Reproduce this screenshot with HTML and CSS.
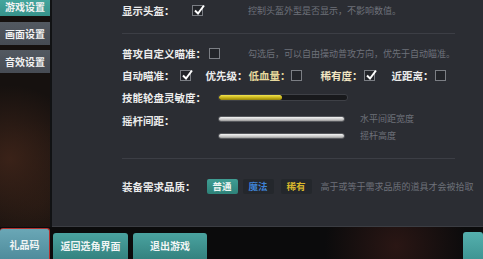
FILE: index.html
```
<!DOCTYPE html>
<html lang="zh-CN">
<head>
    <meta charset="UTF-8">
    <meta name="viewport" content="width=device-width, initial-scale=1.0">
    <title>游戏设置</title>
    <link rel="stylesheet" href="styles.css">
</head>
<body>
    <div class="screen">
        <div class="sidebar">
            <div class="tab tab-first active">游戏设置</div>
            <div class="tab">画面设置</div>
            <div class="tab">音效设置</div>
        </div>

        <div class="panel">
            <div class="row row-top">
                <span class="label label-helmet">显示头盔：</span>
                <span class="check checked"><svg viewBox="0 0 12 12"><path d="M2 6.5 L5 9.5 L11 1.5"/></svg></span>
                <span class="desc desc-helmet">控制头盔外型是否显示，不影响数值。</span>
            </div>
            <div class="sep sep-first"></div>

            <div class="row">
                <span class="label">普攻自定义瞄准：</span>
                <span class="check check-aim"></span>
                <span class="desc desc-aim">勾选后，可以自由操动普攻方向，优先于自动瞄准。</span>
            </div>

            <div class="row">
                <span class="label">自动瞄准：</span>
                <span class="check checked check-auto"><svg viewBox="0 0 12 12"><path d="M2 6.5 L5 9.5 L11 1.5"/></svg></span>
                <span class="label label-priority">优先级：</span>
                <span class="label label-hp">低血量：</span>
                <span class="check"></span>
                <span class="label label-rare">稀有度：</span>
                <span class="check checked check-tight"><svg viewBox="0 0 12 12"><path d="M2 6.5 L5 9.5 L11 1.5"/></svg></span>
                <span class="label label-near">近距离：</span>
                <span class="check check-tight"></span>
            </div>

            <div class="row">
                <span class="label label-fixed">技能轮盘灵敏度：</span>
                <div class="slider slider-yellow">
                    <div class="slider-fill" style="width: 49%"></div>
                </div>
            </div>

            <div class="row row-stick">
                <span class="label label-fixed label-stick">摇杆间距：</span>
                <div class="stick-lines">
                    <div class="stick-line">
                        <div class="slider slider-grey"></div>
                        <span class="desc desc-stick">水平间距宽度</span>
                    </div>
                    <div class="stick-line">
                        <div class="slider slider-grey"></div>
                        <span class="desc desc-stick">摇杆高度</span>
                    </div>
                </div>
            </div>
            <div class="sep sep-second"></div>

            <div class="row row-quality">
                <span class="label">装备需求品质：</span>
                <span class="quality q-normal">普通</span>
                <span class="quality q-magic">魔法</span>
                <span class="quality q-rare">稀有</span>
                <span class="desc desc-quality">高于或等于需求品质的道具才会被拾取</span>
            </div>
        </div>

        <div class="bottombar">
            <div class="btn btn-gift">礼品码</div>
            <div class="btn btn-back">返回选角界面</div>
            <div class="btn btn-quit">退出游戏</div>
            <div class="btn btn-edge"></div>
        </div>
    </div>
</body>
</html>
```

FILE: styles.css
```
body {
    margin: 0;
    width: 483px;
    height: 259px;
    overflow: hidden;
    background: #0c0c0d;
    font-family: "Noto Sans CJK SC", "Noto Sans", sans-serif;
}
.screen {
    display: grid;
    grid-template-columns: 50px 1fr;
    grid-template-rows: 227px 32px;
    column-gap: 2px;
    height: 259px;
    background: #111214;
}

/* left tabs */
.sidebar {
    display: flex;
    flex-direction: column;
    gap: 6px;
    background:
        radial-gradient(circle at 20% 70%, #3a2218 0, rgba(40, 24, 18, 0) 45%),
        radial-gradient(circle at 80% 90%, #241812 0, rgba(36, 24, 18, 0) 40%),
        #16110f;
}
.tab {
    height: 23px;
    line-height: 23px;
    text-align: center;
    font-size: 10px;
    font-weight: bold;
    color: #f2f2f2;
    background: linear-gradient(#535961, #464b53);
}
.tab-first {
    height: 16px;
    line-height: 13px;
}
.tab.active {
    background: linear-gradient(#44a69d, #37928a);
}
.tab + .tab + .tab {
    margin-top: -1px;
}

/* settings panel */
.panel {
    background: #2b2d33;
    border-bottom: 1px solid #3b3d43;
    padding-left: 70px;
    box-sizing: border-box;
}
.row {
    display: flex;
    align-items: center;
    height: 22px;
}
.row-top {
    height: 20px;
}
.label {
    font-size: 10.5px;
    font-weight: bold;
    color: #ececec;
    white-space: nowrap;
}
.label-helmet {
    width: 70px;
}
.label-priority {
    margin-left: 15px;
}
.label-hp {
    margin-left: 1px;
    color: #e6d89c;
}
.label-rare {
    margin-left: 19px;
    color: #f1e6c2;
}
.label-near {
    margin-left: 17px;
}
.label-fixed {
    width: 96px;
}
.desc {
    font-size: 9px;
    color: #6e717a;
    white-space: nowrap;
}
.desc-helmet {
    margin-left: 45px;
}
.desc-aim {
    margin-left: 28px;
}
.desc-stick {
    margin-left: 15px;
}
.desc-quality {
    margin-left: 9px;
}

.check {
    width: 9px;
    height: 9px;
    border: 1px solid #7b7e84;
    background: #222429;
    flex-shrink: 0;
    position: relative;
}
.check svg {
    position: absolute;
    left: 0;
    top: -2px;
    width: 12px;
    height: 12px;
    overflow: visible;
}
.check svg path {
    fill: none;
    stroke: #ffffff;
    stroke-width: 2;
}
.check-aim {
    margin-left: 3px;
}
.check-auto {
    margin-left: 5px;
}
.check-tight {
    margin-left: 1px;
}

.sep {
    width: 333px;
    height: 1px;
    background: #3c3e45;
}
.sep-first {
    margin-top: 13px;
    margin-bottom: 8px;
}
.sep-second {
    margin-top: 14px;
}

/* sliders */
.slider {
    border-radius: 3px;
    box-sizing: border-box;
}
.slider-yellow {
    width: 130px;
    height: 7px;
    background: #18191c;
    border: 1px solid #3e4046;
    overflow: hidden;
}
.slider-fill {
    height: 100%;
    border-radius: 3px;
    background: linear-gradient(#f4e650, #c2ad14 60%, #8f7f0c);
}
.slider-grey {
    width: 127px;
    height: 6px;
    border: 1px solid #55575c;
    background: linear-gradient(#f4f4f4, #c9c9c9 60%, #9a9a9a);
}
.row-stick {
    height: 36px;
    align-items: flex-start;
}
.label-stick {
    padding-top: 5px;
}
.stick-lines {
    display: flex;
    flex-direction: column;
    padding-top: 2px;
}
.stick-line {
    display: flex;
    align-items: center;
    height: 17px;
}

/* quality */
.row-quality {
    margin-top: 19px;
    height: 16px;
}
.quality {
    width: 31px;
    height: 15px;
    line-height: 15px;
    text-align: center;
    font-size: 9.5px;
    font-weight: bold;
    border-radius: 2px;
    background: #24272c;
    margin-left: 5px;
}
.q-normal {
    margin-left: 11px;
    background: linear-gradient(#3f9d93, #2e8279);
    color: #eef6f4;
}
.q-magic {
    color: #3f83d6;
}
.q-rare {
    margin-left: 7px;
    color: #d7b62c;
}

/* bottom buttons */
.bottombar {
    grid-column: 1 / -1;
    display: flex;
    align-items: flex-end;
    background:
        radial-gradient(circle at 82% 60%, #2a1614 0, rgba(42, 22, 20, 0) 18%),
        #0b0b0c;
}
.btn {
    height: 26px;
    line-height: 26px;
    text-align: center;
    font-size: 10px;
    font-weight: bold;
    color: #f1f5f5;
    border-radius: 3px 3px 0 0;
    background: linear-gradient(#4aa3a0, #34827f);
    box-sizing: border-box;
}
.btn-gift {
    width: 50px;
    height: 31px;
    line-height: 31px;
    border: 1.5px solid #b3312e;
    border-bottom: none;
    border-left: none;
    background: linear-gradient(#6aa7b6, #4f8c9c);
}
.btn-back {
    width: 75px;
    margin-left: 3px;
}
.btn-quit {
    width: 74px;
    margin-left: 5px;
}
.btn-edge {
    width: 20px;
    height: 27px;
    margin-left: auto;
    background: linear-gradient(#55b0ae, #3e9593);
}
```
